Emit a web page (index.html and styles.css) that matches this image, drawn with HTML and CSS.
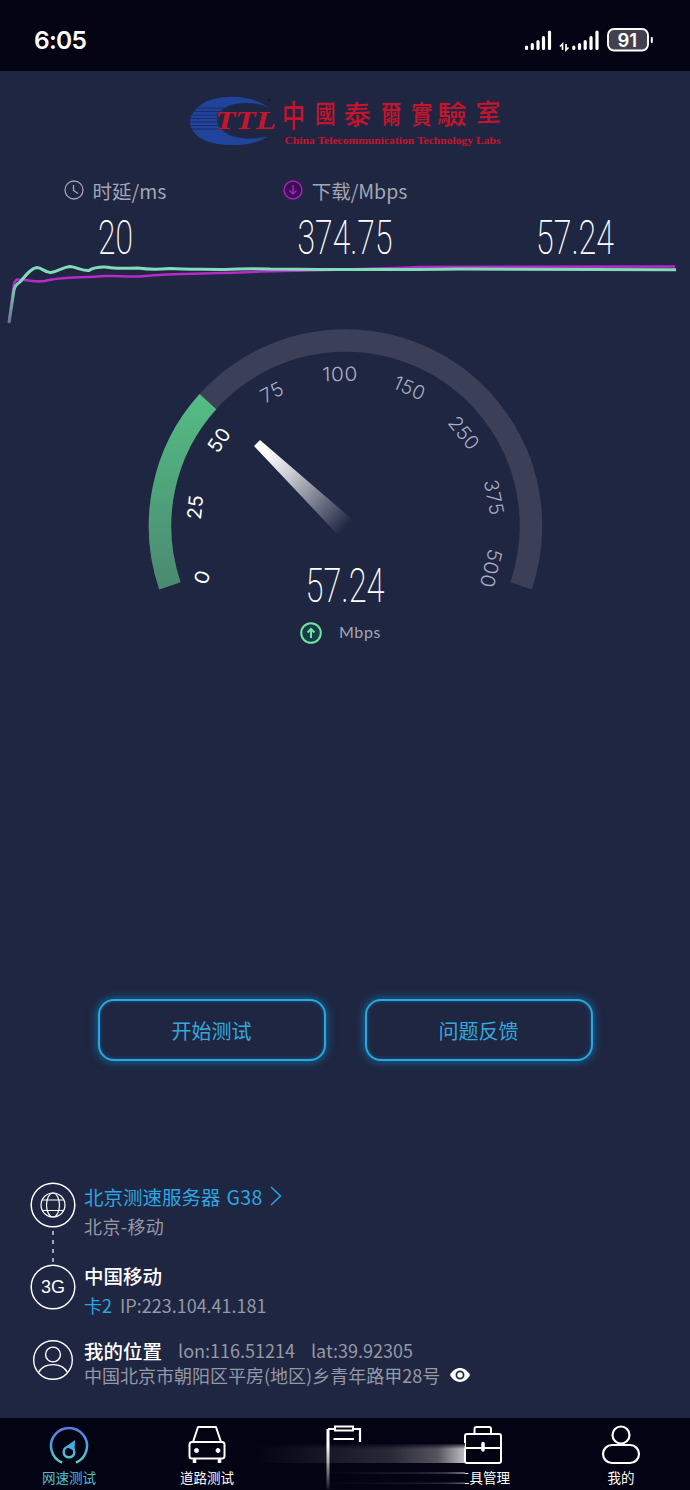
FILE: index.html
```html
<!DOCTYPE html>
<html lang="zh-CN">
<head>
    <meta charset="UTF-8">
    <meta name="viewport" content="width=device-width, initial-scale=1.0">
    <title>网速测试</title>
    <link rel="stylesheet" href="styles.css">
</head>
<body>
    <div class="status-bar">
        <span class="time">6:05</span>
        <svg class="status-icons" width="132" height="30" viewBox="0 0 132 30">
            <g stroke="#fff" stroke-width="3.2" stroke-linecap="round">
                <path d="M4.500 19v1.500M10.300 16.500v4M16 13.500v7M21.500 9.500v11M27.500 4v16.500"/>
                <path d="M51.800 19v1.500M57.500 16.500v4M63.200 13.500v7M69 9.500v11M75 4v16.500"/>
            </g>
            <path d="M40.500 22v-6l-2.500 2.500M44 16v6l2.500-2.500" fill="none" stroke="#fff" stroke-width="1.700"/>
            <rect x="86" y="1" width="40" height="21.500" rx="6" fill="#42424e" stroke="#fff" stroke-width="1.900"/>
            <path d="M129.800 10v4" stroke="#fff" stroke-width="2" stroke-linecap="round"/>
            <text class="battery" x="105.300" y="18.500" text-anchor="middle">91</text>
        </svg>
    </div>

    <div class="logo">
        <svg width="320" height="60" viewBox="0 0 320 60">
            <path d="M82 15C66 1 24-1 9 16C-2 27 2 42 22 49C42 55 70 52 81 43C64 48 43 46 34 36C25 26 32 14 48 11C60 9 74 10 82 15Z" fill="#20439b"/>
            <path d="M9 15h32M7 18.500h29M5 22h29M3 25.500h30M3 29h30M4 32.500h30M5 36h32" stroke="#1c2c68" stroke-width="1"/>
            <circle cx="82.500" cy="7" r="1.800" fill="#151a30"/>
            <text class="logo-ttl" x="28" y="36" textLength="61" lengthAdjust="spacingAndGlyphs">TTL</text>
            <g class="logo-cn">
                <text transform="translate(95 34) scale(.82 1.1)" font-size="28">中</text>
                <text transform="translate(128 30) scale(.9 1.1)" font-size="23">國</text>
                <text transform="translate(157 32) rotate(-2)" font-size="27">泰</text>
                <text transform="translate(194 31) scale(.85 1.1)" font-size="24">爾</text>
                <text transform="translate(224 31) scale(.9 1.1)" font-size="24">實</text>
                <text transform="translate(250 31) scale(1.15 1)" font-size="26">驗</text>
                <text transform="translate(289 29) rotate(-2)" font-size="25">室</text>
            </g>
            <text class="logo-en" x="97.500" y="50.500" textLength="216" lengthAdjust="spacingAndGlyphs">China Telecommunication Technology Labs</text>
        </svg>
    </div>

    <div class="metrics">
        <div class="metric">
            <div class="metric-label">
                <svg width="20" height="20" viewBox="0 0 20 20" fill="none" stroke="#a3a6b3" stroke-width="1.300">
                    <circle cx="10" cy="10" r="9"/><path d="M9.500 5v5.500l4.500 3"/>
                </svg>
                <span>时延/ms</span>
            </div>
            <svg class="digits" width="230" height="52"><text x="98" y="44" textLength="35" lengthAdjust="spacingAndGlyphs">20</text></svg>
        </div>
        <div class="metric">
            <div class="metric-label">
                <svg width="20" height="20" viewBox="0 0 20 20" fill="#381154" stroke="#b51bc4" stroke-width="1.400">
                    <circle cx="10" cy="10" r="9"/><path d="M10 5v9M6.500 10.500L10 14l3.500-3.500" fill="none"/>
                </svg>
                <span>下载/Mbps</span>
            </div>
            <svg class="digits" width="230" height="52"><text x="67.500" y="44" textLength="95" lengthAdjust="spacingAndGlyphs">374.75</text></svg>
        </div>
        <div class="metric">
            <div class="metric-label"></div>
            <svg class="digits" width="230" height="52"><text x="76" y="44" textLength="78" lengthAdjust="spacingAndGlyphs">57.24</text></svg>
        </div>
    </div>

    <svg class="trend" width="690" height="64" viewBox="0 262 690 64" fill="none">
        <defs>
            <linearGradient id="up" gradientUnits="userSpaceOnUse" x1="0" y1="324" x2="0" y2="268">
                <stop offset="0" stop-color="#60758c"/><stop offset=".8" stop-color="#82dcb9"/>
            </linearGradient>
        </defs>
        <path d="M9 322L14 284Q15 279 19 279.500C28 280 37 282.500 45 281C60 276.500 80 278 105 276C120 275.500 130 277.500 145 276C170 273 220 274 260 271.500C310 270.500 370 269 420 267L675 266.500" stroke="#b52ac8" stroke-width="2.600"/>
        <path d="M9 323L14 290Q15 285 20 282C26 275 31 268 37 267.500C42 267.500 45 273 51 272.500C59 271 63 267 70 266.500C77 267 82 271 89 270.500C95 266.500 102 267 108 267.200C115 269 128 268 138 268C148 269.500 158 269.500 170 268.500C185 269.500 205 269 225 269.500C240 268.500 255 268.500 270 269C350 269.500 400 270 460 269C500 269 570 270 676 269.800" stroke="url(#up)" stroke-width="3"/>
    </svg>

    <svg class="gauge" width="690" height="290" viewBox="0 326 690 290">
        <defs>
            <linearGradient id="arc" x1="0" y1="1" x2="0" y2="0">
                <stop offset="0" stop-color="#4b8a72"/><stop offset="1" stop-color="#53bb83"/>
            </linearGradient>
            <linearGradient id="needle" gradientUnits="userSpaceOnUse" x1="256" y1="443" x2="348" y2="526">
                <stop offset=".1" stop-color="#fff"/><stop offset=".35" stop-color="#d0d1d8"/><stop offset="1" stop-color="#1f2641"/>
            </linearGradient>
        </defs>
        <path d="M169.900 585.800A185.500 185.500 0 1 1 521.100 585.800" fill="none" stroke="#3c3f58" stroke-width="22.500"/>
        <path d="M169.900 585.800A185.500 185.500 0 0 1 207.900 401.600" fill="none" stroke="url(#arc)" stroke-width="22.500"/>
        <path d="M254 446L260 440L354 521L338 535Z" fill="url(#needle)"/>
        <g class="ticks">
            <g class="passed">
                <text transform="translate(202 577) rotate(-73) scale(1.1 1)" y="7">0</text>
                <text transform="translate(195 507) rotate(-84)" y="7">25</text>
                <text transform="translate(219 440) rotate(-56)" y="7">50</text>
            </g>
            <text transform="translate(272 392) rotate(-28)" y="7">75</text>
            <text transform="translate(340 374) rotate(-1) scale(1.08 1)" y="7">100</text>
            <text transform="translate(409.500 388) rotate(24)" y="7">150</text>
            <text transform="translate(464 433) rotate(51)" y="7">250</text>
            <text transform="translate(494 497.500) rotate(79)" y="7">375</text>
            <text transform="translate(491 568.500) rotate(104) scale(1.06 1)" y="7">500</text>
        </g>
        <text class="reading" x="305.500" y="602" textLength="79" lengthAdjust="spacingAndGlyphs">57.24</text>
    </svg>
    <div class="unit">
        <svg width="22" height="22" viewBox="0 0 22 22" fill="#153e45" stroke="#75e0a6" stroke-width="2">
            <circle cx="11" cy="11" r="9.800"/><path d="M11 16V7M7.500 10.500L11 7l3.500 3.500" fill="none"/>
        </svg>
        <span>Mbps</span>
    </div>

    <div class="actions">
        <button>开始测试</button>
        <button>问题反馈</button>
    </div>

    <div class="info">
        <div class="info-row server">
            <svg class="info-icon" width="46" height="46" viewBox="0 0 46 46" fill="none" stroke="#fff">
                <circle cx="23" cy="23" r="21.800" stroke-width="1.500"/>
                <g stroke-width="1.200">
                    <circle cx="23" cy="23" r="12"/><ellipse cx="23" cy="23" rx="6.500" ry="12"/><path d="M12.500 18h21M12.500 28.500h21"/>
                </g>
            </svg>
            <div class="info-text">
                <div class="title blue">北京测速服务器 <span class="server-id">G38</span>
                    <svg width="12" height="20" viewBox="0 0 12 20" fill="none" stroke="#2da5e0" stroke-width="1.500"><path d="M1 1l9.500 9L1 19"/></svg>
                </div>
                <div class="sub region">北京-移动</div>
            </div>
        </div>
        <div class="info-row carrier">
            <svg class="info-icon" width="46" height="46" viewBox="0 0 46 46">
                <circle cx="23" cy="23" r="21.800" fill="none" stroke="#fff" stroke-width="1.500"/>
                <text class="net" x="23" y="29" text-anchor="middle">3G</text>
            </svg>
            <div class="info-text">
                <div class="title">中国移动</div>
                <div class="sub"><span class="blue">卡2</span><span class="ip">IP:223.104.41.181</span></div>
            </div>
        </div>
        <div class="info-row location">
            <svg class="info-icon" width="46" height="46" viewBox="0 0 46 46" fill="none" stroke="#fff" stroke-width="1.400">
                <circle cx="23" cy="23" r="19.300"/><circle cx="23" cy="17.500" r="7.400"/><path d="M8.500 35.500C14 25 32 25 37.500 35.500"/>
            </svg>
            <div class="info-text">
                <div class="title">我的位置<span class="coord lon">lon:116.51214</span><span class="coord lat">lat:39.92305</span></div>
                <div class="sub address"><span>中国北京市朝阳区平房(地区)乡青年路甲28号</span>
                    <svg width="20" height="14" viewBox="0 0 20 14"><path d="M0 7C5-2.300 15-2.300 20 7C15 16.300 5 16.300 0 7Z" fill="#fff"/><circle cx="10" cy="7" r="3.600" fill="#fff" stroke="#1f2641" stroke-width="1.700"/></svg>
                </div>
            </div>
        </div>
        <div class="link-line"></div>
    </div>

    <div class="tab-bar">
        <div class="tab active">
            <svg width="40" height="40" viewBox="0 0 40 40" fill="none">
                <defs>
                    <linearGradient id="tab" gradientUnits="userSpaceOnUse" x1="0" y1="1" x2="0" y2="39"><stop offset="0" stop-color="#6472d8"/><stop offset=".5" stop-color="#43a8df"/><stop offset="1" stop-color="#5cd3c6"/></linearGradient>
                </defs>
                <g stroke="url(#tab)" stroke-width="2.500">
                    <path d="M13 37.500A18 18 0 1 1 27 37.500"/><circle cx="20" cy="27" r="5.300"/>
                </g>
                <path d="M17 21.500L26 15L25.500 26Z" fill="#45ade0"/>
            </svg>
            <span>网速测试</span>
        </div>
        <div class="tab">
            <svg width="40" height="40" viewBox="0 0 40 40" fill="none" stroke="#fff" stroke-width="2" stroke-linejoin="round">
                <path d="M6 17L11 2h18l5 15M5 17h30q2.500 0 2.500 2.500V31q0 2.500-2.500 2.500H5Q2.500 33.500 2.500 31V19.500Q2.500 17 5 17Z"/>
                <path d="M7.500 34v4M32.500 34v4" stroke-width="3.500"/>
                <circle cx="9.500" cy="25.500" r="2" fill="#fff" stroke-width="1"/><circle cx="31" cy="25.500" r="2" fill="#fff" stroke-width="1"/>
            </svg>
            <span>道路测试</span>
        </div>
        <div class="tab"></div>
        <div class="tab">
            <svg width="40" height="40" viewBox="0 0 40 40" fill="none" stroke="#fff" stroke-width="2">
                <rect x="2" y="9" width="36" height="29" rx="2"/><path d="M11.500 8.500V4q0-2 2-2h12.500q2 0 2 2v4.500M2 23h36"/><path d="M20 18.500v6.500" stroke-width="3.500" stroke-linecap="round"/>
            </svg>
            <span>工具管理</span>
        </div>
        <div class="tab">
            <svg width="40" height="40" viewBox="0 0 40 40" fill="none" stroke="#fff" stroke-width="2.200">
                <circle cx="20" cy="10" r="8.500"/><rect x="2" y="20" width="36" height="18" rx="9"/>
            </svg>
            <span>我的</span>
        </div>
        <!-- smeared middle tab -->
        <svg class="smear" width="214" height="72" viewBox="251 1418 214 72">
            <defs>
                <linearGradient id="streak"><stop offset="0" stop-color="#fff" stop-opacity="0"/><stop offset=".65" stop-color="#fff" stop-opacity=".15"/><stop offset=".87" stop-color="#fff" stop-opacity=".32"/><stop offset="1" stop-color="#fff" stop-opacity=".75"/></linearGradient>
                <linearGradient id="streak-y" x1="0" y1="0" x2="0" y2="1"><stop offset="0" stop-color="#040313"/><stop offset=".3" stop-color="#040313" stop-opacity="0"/></linearGradient>
                <linearGradient id="fade" gradientUnits="userSpaceOnUse" x1="0" y1="1427" x2="0" y2="1488"><stop offset=".3" stop-color="#fff"/><stop offset="1" stop-color="#fff" stop-opacity=".1"/></linearGradient>
            </defs>
            <rect x="251" y="1466" width="214" height="24" fill="#040313"/>
            <rect x="254" y="1444" width="211" height="19" fill="url(#streak)"/>
            <rect x="254" y="1443" width="211" height="20" fill="url(#streak-y)"/>
            <rect x="320" y="1472" width="145" height="2" fill="url(#streak)" opacity=".6"/>
            <rect x="320" y="1482.500" width="145" height="1.500" fill="url(#streak)" opacity=".5"/>
            <rect x="326.500" y="1429" width="3" height="60" fill="url(#fade)"/>
            <path d="M328 1429h6M353 1429h7v13M333.500 1439H354" fill="none" stroke="#fff" stroke-width="2.200"/>
            <rect x="335" y="1426.500" width="18" height="4" fill="none" stroke="#fff" stroke-width="2"/>
        </svg>
    </div>
</body>
</html>
```
FILE: styles.css
```css
body {
    margin: 0;
    height: 1490px;
    display: flex;
    flex-direction: column;
    background: #1f2641;
    color: #fff;
    font-family: "Noto Sans CJK SC", sans-serif;
    overflow: hidden;
}

svg {
    display: block;
    flex-shrink: 0;
}

.status-bar {
    height: 71px;
    padding: 0 34px;
    display: flex;
    align-items: center;
    justify-content: space-between;
    background: #040313;
    box-sizing: border-box;
}

.time {
    font: 600 24.5px/30px Inter, sans-serif;
    letter-spacing: -0.7px;
    margin-top: 9px;
}

.status-icons {
    margin: 15px 2px 0 0;
}

.battery {
    font: 600 18.5px Inter, sans-serif;
    fill: #fff;
}

/* Logo */
.logo {
    height: 101px;
    padding: 22px 0 0 187px;
    box-sizing: border-box;
}

.logo text {
    fill: #c6142e;
}

.logo-ttl {
    font: italic bold 25px "Liberation Serif", serif;
}

.logo-cn {
    font-family: "Noto Sans CJK TC", sans-serif;
    font-weight: 500;
}

.logo-en {
    font: bold 11px "Liberation Serif", serif;
}

/* Metrics */
.metrics {
    display: grid;
    grid-template-columns: repeat(3, 1fr);
    height: 90px;
}

.metric-label {
    height: 36px;
    padding-bottom: 2px;
    display: flex;
    align-items: center;
    justify-content: center;
    gap: 9px;
    color: #a3a6b3;
    font-size: 19.5px;
}

.digits {
    overflow: visible;
}

.digits text,
.reading {
    font: 200 49px Roboto, sans-serif;
    fill: #fff;
}

/* Gauge */
.ticks text {
    font: 300 19.5px Inter, sans-serif;
    letter-spacing: 0.5px;
    text-anchor: middle;
    fill: #a9adc4;
}

.ticks .passed text {
    font-weight: 400;
    fill: #fff;
}

.unit {
    height: 34px;
    display: flex;
    align-items: center;
    gap: 17px;
    padding-left: 300px;
    color: #a3a6b3;
    font: 16px Lato, sans-serif;
    letter-spacing: 0.6px;
}

.unit span {
    margin-top: -3px;
}

/* Buttons */
.actions {
    display: flex;
    justify-content: center;
    gap: 39px;
    margin-top: 349px;
}

button {
    width: 228px;
    height: 62px;
    padding: 0;
    border: 2px solid #2fa5d9;
    border-radius: 16px;
    background: #1f2641;
    box-shadow: 0 0 10px #0879b5, inset 0 0 4px #0b5c8e;
    color: #35a8dc;
    font: 20px "Noto Sans CJK SC", sans-serif;
}

/* Server, carrier and location */
.info {
    position: relative;
    height: 210px;
    margin-top: 121px;
    padding-left: 30px;
}

.info-row {
    display: flex;
    gap: 8px;
    height: 82px;
}

.info-row.carrier {
    height: 73px;
}

.title {
    display: flex;
    align-items: center;
    height: 30px;
    font-size: 19.5px;
}

.title svg {
    margin: -1px 0 0 7px;
}

.server-id {
    margin-left: 6px;
    letter-spacing: 0.4px;
}

.sub {
    display: flex;
    align-items: center;
    height: 30px;
    color: #9598a6;
    font-size: 18px;
}

.region {
    letter-spacing: 0.4px;
}

.server .title {
    margin-top: -1px;
}

.carrier .title {
    margin-top: -4px;
    font-weight: 500;
}

.location .title {
    margin-top: 0;
    height: 26px;
    font-weight: 500;
}

.location .sub {
    height: 24px;
}

.blue {
    color: #2da5e0;
}

.ip {
    margin-left: 8px;
}

.net {
    font: 18px "Liberation Sans", sans-serif;
    fill: #fff;
}

.coord {
    color: #9598a6;
    font-size: 18px;
    font-weight: 400;
}

.lon {
    margin-left: 16px;
}

.lat {
    margin-left: 16px;
}

.address svg {
    margin-left: 10px;
}

.link-line {
    position: absolute;
    left: 52px;
    top: 49px;
    width: 2px;
    height: 32px;
    background: repeating-linear-gradient(#a3a6b3 0 4px, transparent 4px 9px);
}

/* Tab bar */
.tab-bar {
    position: relative;
    display: grid;
    grid-template-columns: repeat(5, 1fr);
    height: 72px;
    margin-top: auto;
    background: #040313;
}

.tab {
    display: flex;
    flex-direction: column;
    align-items: center;
    padding-top: 7px;
    font-size: 13.5px;
    line-height: 24px;
}

.tab.active {
    color: #4fc0cd;
}

.smear {
    position: absolute;
    left: 251px;
    top: 0;
}
```
